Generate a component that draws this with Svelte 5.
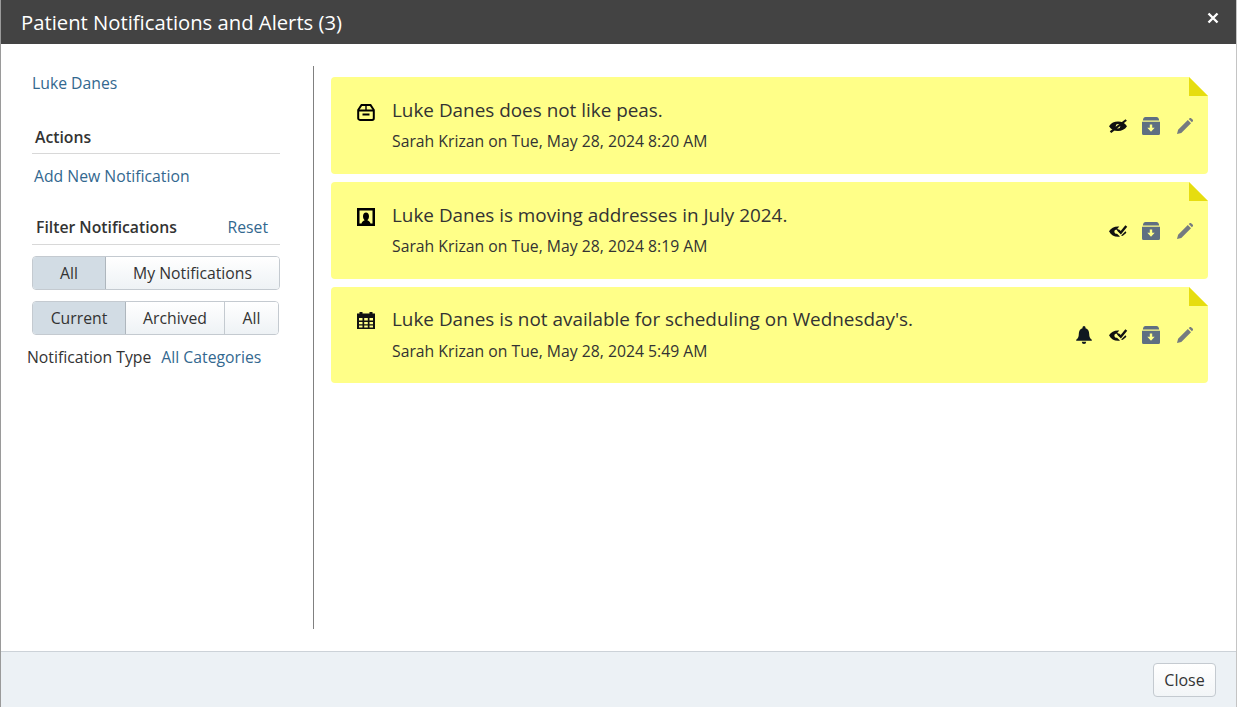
<script>
  const notes = [
    { text: 'Luke Danes does not like peas.', meta: 'Sarah Krizan on Tue, May 28, 2024 8:20 AM', icon: 'box', seen: false, bell: false },
    { text: 'Luke Danes is moving addresses in July 2024.', meta: 'Sarah Krizan on Tue, May 28, 2024 8:19 AM', icon: 'person', seen: true, bell: false },
    { text: "Luke Danes is not available for scheduling on Wednesday's.", meta: 'Sarah Krizan on Tue, May 28, 2024 5:49 AM', icon: 'calendar', seen: true, bell: true }
  ];
</script>

<div class="modal">
  <header class="head">
    <h1>Patient Notifications and Alerts (3)</h1>
    <svg class="close-x" viewBox="0 0 12 12" width="12" height="12"><path d="M1.500 1.500l9 9M10.500 1.500l-9 9" stroke="#fff" stroke-width="2.400" fill="none"/></svg>
  </header>

  <main class="body">
    <aside class="side">
      <a class="patient link">Luke Danes</a>

      <div class="section actions">
        <div class="section-title"><span>Actions</span></div>
        <a class="link add">Add New Notification</a>
      </div>

      <div class="section filter">
        <div class="section-title"><span>Filter Notifications</span><a class="link reset">Reset</a></div>
        <div class="btn-group first">
          <button class="on w-all">All</button>
          <button class="grow">My Notifications</button>
        </div>
        <div class="btn-group second">
          <button class="on w-current">Current</button>
          <button class="w-archived">Archived</button>
          <button class="grow">All</button>
        </div>
        <div class="type"><span>Notification Type</span><a class="link">All Categories</a></div>
      </div>
    </aside>

    <section class="list">
      {#each notes as n}
        <article class="note">
          <div class="cat">
            {#if n.icon === 'box'}
              <svg viewBox="0 0 18 18" width="18" height="18"><path d="M4.500 2h9l3.300 5v8.200a1.700 1.700 0 0 1-1.700 1.700H2.900a1.700 1.700 0 0 1-1.700-1.700V7z" fill="none" stroke="#000" stroke-width="2" stroke-linejoin="miter"/><path d="M1.500 7.500h15" stroke="#000" stroke-width="2"/><path d="M9 2v5" stroke="#000" stroke-width="1.400"/><path d="M5.500 11.500h7" stroke="#000" stroke-width="2"/></svg>
            {:else if n.icon === 'person'}
              <svg viewBox="0 0 18 18" width="18" height="18"><path fill-rule="evenodd" d="M0 0h18v18H0zM2.500 2.500v13h2c.2-1.800 1.700-2.500 3.200-3.300-.9-.8-1.700-2-1.700-4 0-2.400 1.200-3.800 3-3.800s3 1.400 3 3.800c0 2-.8 3.200-1.700 4 1.500.8 3 1.500 3.200 3.300h2v-13z" fill="#000"/></svg>
            {:else}
              <svg class="cal" viewBox="0 0 18 18" width="18" height="18"><path fill-rule="evenodd" d="M0 1.500h2.500V0h3v1.500h7V0h3v1.500H18V17H0zM2 6v2.500h3.500V6zM7.200 6v2.500h3.600V6zM12.500 6v2.500H16V6zM2 10v2.200h3.500V10zM7.200 10v2.200h3.600V10zM12.500 10v2.200H16V10zM2 13.500V15.500h3.500v-2zM7.200 13.500V15.500h3.600v-2zM12.500 13.500V15.500H16v-2z" fill="#111"/></svg>
            {/if}
          </div>
          <div class="copy">
            <p class="text">{n.text}</p>
            <p class="meta">{n.meta}</p>
          </div>
          <div class="tools">
            {#if n.bell}
              <svg class="bell" viewBox="0 0 16 18" width="16" height="18"><path d="M8 0a1.500 1.500 0 0 1 1.500 1.500v.7C12 2.900 13.200 5 13.200 8c0 3 .9 4.300 2.600 5.700v1H.2v-1C1.900 12.300 2.800 11 2.800 8c0-3 1.200-5.100 3.700-5.800v-.7A1.500 1.500 0 0 1 8 0zM5.800 15.800h4.400a2.200 2.200 0 0 1-4.400 0z" fill="#101820"/></svg>
            {/if}
            {#if n.seen}
              <svg class="eye" viewBox="0 0 20 14" width="20" height="14"><path fill-rule="evenodd" d="M1 7.200C3 4 6 2.400 10 2.400l1.300.1-2 2.300L12.700 8l-.8.900-3.600-3.400c-1.500.3-2.200 1.500-1.800 2.700.3 1 1.300 1.700 2.500 1.600l3 2.700c-.6.200-1.300.3-2 .3-4 0-7-1.900-9-5.600z" fill="#111"/><path d="M10 6l2.800 2.700L18.300 2" fill="none" stroke="#111" stroke-width="2.400"/><path d="M14 12c1.700-.7 3.100-1.800 4.400-3.500l-1-1.300-4.200 4.300z" fill="#111"/></svg>
            {:else}
              <svg class="eye" viewBox="0 0 20 14" width="20" height="14"><path fill-rule="evenodd" d="M1 7.300C3.300 4 6.200 2.600 10 2.600s6.700 1.400 9 4.700c-2.300 3.300-5.200 4.700-9 4.700S3.300 10.600 1 7.300zM10 5a2.300 2.300 0 1 0 0 4.600A2.300 2.300 0 0 0 10 5z" fill="#111"/><path d="M2.500 13.200L18.200 1" stroke="#111" stroke-width="2.200"/></svg>
            {/if}
            <svg class="arch" viewBox="0 0 18 18" width="18" height="18"><path fill-rule="evenodd" d="M3.500 0h11c1.200 0 2 .7 2.400 2.200L17.200 3.500H.8L1.100 2.200C1.500.7 2.300 0 3.500 0zM0 4.800h18v11.700a1.500 1.500 0 0 1-1.500 1.500h-15A1.500 1.500 0 0 1 0 16.500zM7.800 7.500v3.200H5.300L9 14.700l3.700-4H10.200V7.500z" fill="#5f6f82"/></svg>
            <svg class="pen" viewBox="0 0 16 16" width="16" height="16"><path d="M0 16l1.100-4.300L10.800 2l3.200 3.200-9.700 9.700zM11.700 1.100l.7-.7a1.400 1.400 0 0 1 2 0l1.200 1.200a1.400 1.400 0 0 1 0 2l-.7.700z" fill="#757b80"/></svg>
          </div>
        </article>
      {/each}
    </section>
  </main>

  <footer class="foot">
    <button class="close">Close</button>
  </footer>
</div>

<style>
  :global(body) {
    margin: 0;
    background: #fff;
  }

  .modal {
    height: 707px;
    box-sizing: border-box;
    display: flex;
    flex-direction: column;
    border-left: 1px solid #9a9a9a;
    border-right: 1px solid #c4c4c4;
    font-family: "Open Sans", sans-serif;
    color: #333;
    font-size: 15.75px;
    overflow: hidden;
  }

  .head {
    height: 44px;
    flex: none;
    background: #434343;
    display: flex;
    align-items: center;
    justify-content: space-between;
    padding: 0 17px 0 20px;
  }

  .head h1 {
    margin: 0;
    color: #fff;
    font-size: 20.25px;
    font-weight: 400;
    line-height: 43px;
  }

  .close-x {
    margin-bottom: 9px;
  }

  .body {
    flex: 1;
    display: flex;
    padding: 22px 28px 22px 0;
    min-height: 0;
  }

  .side {
    width: 313px;
    flex: none;
    box-sizing: border-box;
    border-right: 1px solid #808080;
    padding: 6px 33px 0 31px;
  }

  .link {
    color: #33688f;
  }

  .patient {
    display: block;
    line-height: 22px;
  }

  .section-title {
    display: flex;
    justify-content: space-between;
    align-items: center;
    height: 33px;
    border-bottom: 1px solid #d8d8d8;
    padding: 0 12px 0 4px;
    color: #333;
    box-sizing: border-box;
  }

  .section-title span {
    font-weight: 600;
  }

  .actions {
    margin-top: 27px;
  }

  .actions .section-title {
    padding-left: 3px;
  }

  .add {
    display: block;
    padding: 11px 0 0 2px;
    line-height: 22px;
  }

  .filter {
    margin-top: 24px;
  }

  .filter .section-title {
    height: 34px;
    padding-bottom: 2px;
  }

  .btn-group {
    display: flex;
    height: 34px;
    box-sizing: border-box;
    border: 1px solid #c4cad0;
    border-radius: 4px;
    overflow: hidden;
    margin-top: 11px;
  }

  .btn-group.second {
    margin-right: 1px;
  }

  .btn-group button {
    font: inherit;
    color: #333;
    padding: 0;
    border: 0;
    border-left: 1px solid #c4cad0;
    background: linear-gradient(#fff, #eef2f5);
  }

  .btn-group button:first-child {
    border-left: 0;
  }

  .btn-group button.on {
    background: #d2dce4;
    border-right: 1px solid #aeb6bd;
  }

  .btn-group button.on + button {
    border-left: 0;
  }

  .w-all {
    width: 73px;
  }

  .w-current {
    width: 93px;
  }

  .w-archived {
    width: 98px;
  }

  .grow {
    flex: 1;
  }

  .type {
    display: flex;
    gap: 10px;
    margin: 11px 0 0 -5px;
    line-height: 22px;
    white-space: nowrap;
  }

  .list {
    flex: 1;
    display: flex;
    flex-direction: column;
    gap: 8px;
    padding: 11px 0 0 17px;
  }

  .note {
    position: relative;
    height: 97px;
    box-sizing: border-box;
    background: #ffff88;
    border-radius: 4px;
    display: flex;
    padding: 0 15px 0 26px;
  }

  .note:last-child {
    height: 96px;
  }

  .note:last-child .copy {
    padding-top: 19px;
  }

  .note:last-child .meta {
    margin-top: 8px;
  }

  .note::after {
    content: "";
    position: absolute;
    top: 0;
    right: 0;
    width: 19px;
    height: 19px;
    background: #e6dd10;
    clip-path: polygon(0 0, 100% 100%, 0 100%);
  }

  .note::before {
    content: "";
    position: absolute;
    top: 0;
    right: 0;
    width: 19px;
    height: 19px;
    background: #fff;
    clip-path: polygon(0 0, 100% 0, 100% 100%);
  }

  .cat {
    width: 35px;
    flex: none;
    padding-top: 26px;
  }

  .cat svg {
    display: block;
  }

  .cat .cal {
    margin-top: -1px;
  }

  .copy {
    flex: 1;
    padding-top: 20px;
  }

  .text {
    margin: 0;
    font-size: 18.9px;
    line-height: 26px;
  }

  .meta {
    margin: 7px 0 0;
    line-height: 22px;
  }

  .tools {
    display: flex;
    align-items: center;
    gap: 14px;
  }

  .tools svg {
    flex: none;
  }

  .bell {
    margin-right: 2px;
  }

  .pen {
    margin-left: 3px;
  }

  .foot {
    height: 56px;
    flex: none;
    box-sizing: border-box;
    border-top: 1px solid #ccd2d8;
    background: #ecf1f5;
    display: flex;
    justify-content: flex-end;
    align-items: flex-start;
    padding: 11px 20px 0 0;
  }

  .close {
    width: 63px;
    height: 34px;
    font: inherit;
    font-size: 16px;
    color: #333;
    border: 1px solid #c4cad0;
    border-radius: 4px;
    background: linear-gradient(#fff, #f2f5f7);
    padding: 0;
  }
</style>
